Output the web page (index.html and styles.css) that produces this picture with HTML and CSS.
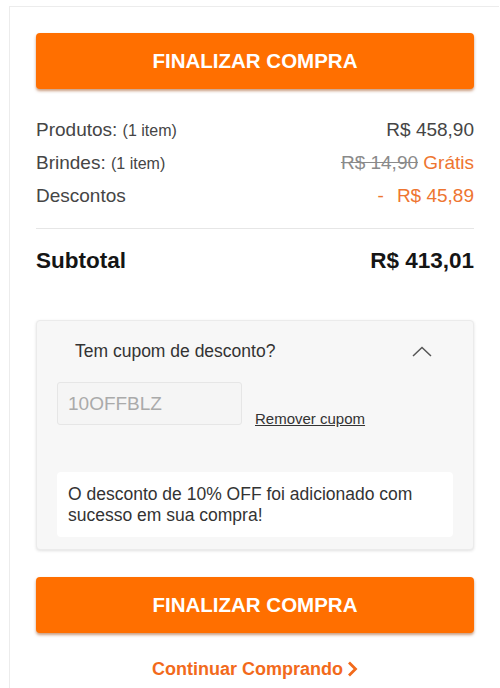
FILE: index.html
```html
<!DOCTYPE html>
<html lang="pt-BR">

<head>
    <meta charset="UTF-8" />
    <meta name="viewport" content="width=device-width, initial-scale=1.0" />
    <title>Carrinho</title>
    <link rel="stylesheet" href="styles.css">
</head>

<body>
    <div class="cart-summary">
        <button class="checkout-btn" type="button">FINALIZAR COMPRA</button>

        <div class="totals">
            <div class="row">
                <span>Produtos: <small>(1 item)</small></span>
                <span>R$ 458,90</span>
            </div>
            <div class="row">
                <span>Brindes: <small>(1 item)</small></span>
                <span><s class="old-price">R$ 14,90</s> <span class="orange">Grátis</span></span>
            </div>
            <div class="row">
                <span>Descontos</span>
                <span class="orange discount"><span class="dash">-</span>R$ 45,89</span>
            </div>
        </div>

        <div class="subtotal">
            <span>Subtotal</span>
            <span>R$ 413,01</span>
        </div>

        <div class="coupon">
            <div class="coupon-head">
                <span>Tem cupom de desconto?</span>
                <svg class="chevron" width="20" height="11" viewBox="0 0 20 11">
                    <path d="M1 10 L10 1.5 L19 10" fill="none" stroke="#555" stroke-width="1.5" />
                </svg>
            </div>
            <div class="coupon-form">
                <input type="text" value="10OFFBLZ" disabled />
                <a href="#" class="remove-link">Remover cupom</a>
            </div>
            <div class="coupon-msg">
                O desconto de 10% OFF foi adicionado com sucesso em sua compra!
            </div>
        </div>

        <button class="checkout-btn bottom" type="button">FINALIZAR COMPRA</button>

        <a href="#" class="continue">Continuar Comprando
            <svg width="11" height="16" viewBox="0 0 11 16">
                <path d="M2 1.5 L8.5 8 L2 14.5" fill="none" stroke="#f26a1b" stroke-width="2.8" />
            </svg>
        </a>
    </div>
</body>

</html>
```

FILE: styles.css
```css
body,
html {
    margin: 0;
    padding: 0;
    font-family: 'Liberation Sans', Arial, sans-serif;
    background: #fff;
    overflow: hidden;
}

.cart-summary {
    margin: 6px 0 0 9px;
    width: 438px;
    padding: 26px 25px 40px 26px;
    border-top: 1px solid #ececec;
    border-left: 1px solid #ececec;
}

.checkout-btn {
    display: block;
    width: 100%;
    height: 56px;
    border: none;
    border-radius: 4px;
    background: #ff6f00;
    color: #fff;
    font-family: 'Liberation Sans', Arial, sans-serif;
    font-size: 20.5px;
    font-weight: bold;
    box-shadow: 0 2px 3px rgba(150, 60, 0, 0.5);
    cursor: pointer;
}

.totals {
    margin-top: 24px;
    padding-bottom: 16px;
    border-bottom: 1px solid #e6e6e6;
}

.row {
    display: flex;
    justify-content: space-between;
    align-items: center;
    height: 33px;
    font-size: 19px;
    color: #454545;
}

.row small {
    font-size: 16px;
}

.old-price {
    color: #8a8a8a;
}

.orange {
    color: #ee7530;
}

.dash {
    margin-right: 13px;
}

.subtotal {
    display: flex;
    justify-content: space-between;
    align-items: center;
    margin-top: 16px;
    height: 32px;
    font-size: 22.5px;
    font-weight: bold;
    color: #151515;
}

.coupon {
    margin-top: 43px;
    background: #f7f7f7;
    border: 1px solid #ebebeb;
    border-radius: 4px;
    box-shadow: 0 1px 3px rgba(0, 0, 0, 0.12);
    padding: 20px 20px 12px 20px;
}

.coupon-head {
    display: flex;
    justify-content: space-between;
    align-items: center;
    margin: 0 21px 0 18px;
    height: 20px;
    font-size: 17.5px;
    color: #333;
}

.coupon-form {
    display: flex;
    align-items: flex-end;
    gap: 13px;
    margin-top: 21px;
}

.coupon-form input {
    width: 185px;
    height: 43px;
    box-sizing: border-box;
    padding: 0 10px;
    border: 1px solid #e6e6e6;
    border-radius: 3px;
    background: #f5f5f5;
    font-family: 'Liberation Sans', Arial, sans-serif;
    font-size: 19px;
    color: #aaa;
}

.remove-link {
    font-size: 15px;
    color: #333;
    text-decoration: underline;
    margin-bottom: -2px;
}

.coupon-msg {
    margin-top: 47px;
    background: #fff;
    border-radius: 4px;
    padding: 12px 11px 11px;
    font-size: 17.5px;
    line-height: 21px;
    color: #333;
}

.checkout-btn.bottom {
    margin-top: 27px;
}

.continue {
    display: flex;
    justify-content: center;
    align-items: center;
    gap: 4px;
    margin-top: 26px;
    height: 20px;
    font-size: 18px;
    font-weight: bold;
    color: #f26a1b;
    text-decoration: none;
}
```
